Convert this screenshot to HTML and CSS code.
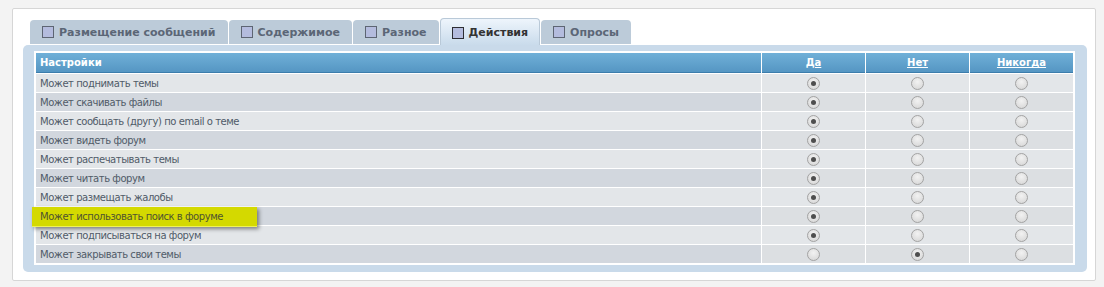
FILE: index.html
```html
<!DOCTYPE html>
<html lang="ru">
<head>
  <meta charset="UTF-8">
  <title>Права доступа</title>
  <link rel="stylesheet" href="styles.css">
</head>
<body>

<div class="wrap">
  <ul class="tabs">
    <li class="tab"><span class="box"></span>Размещение сообщений</li>
    <li class="tab"><span class="box"></span>Содержимое</li>
    <li class="tab"><span class="box"></span>Разное</li>
    <li class="tab active"><span class="box"></span>Действия</li>
    <li class="tab"><span class="box"></span>Опросы</li>
  </ul>

  <div class="panel">
    <table class="perms">
      <thead>
        <tr>
          <th class="name">Настройки</th>
          <th><a href="#">Да</a></th>
          <th><a href="#">Нет</a></th>
          <th><a href="#">Никогда</a></th>
        </tr>
      </thead>
      <tbody id="permBody"></tbody>
    </table>
  </div>
</div>

<script>
  // Permission rows: label + selected column (0 = Да, 1 = Нет, 2 = Никогда)
  const perms = [
    ["Может поднимать темы", 0],
    ["Может скачивать файлы", 0],
    ["Может сообщать (другу) по email о теме", 0],
    ["Может видеть форум", 0],
    ["Может распечатывать темы", 0],
    ["Может читать форум", 0],
    ["Может размещать жалобы", 0],
    ["Может использовать поиск в форуме", 0, true],
    ["Может подписываться на форум", 0],
    ["Может закрывать свои темы", 1]
  ];

  const tbody = document.getElementById("permBody");
  perms.forEach((p, i) => {
    const row = document.createElement("tr");
    row.className = i % 2 ? "row2" : "row1";
    const label = p[2] ? `<span class="mark">${p[0]}</span>` : p[0];
    let cells = `<td class="name">${label}</td>`;
    for (let c = 0; c < 3; c++) {
      cells += `<td><span class="radio${p[1] === c ? " on" : ""}"></span></td>`;
    }
    row.innerHTML = cells;
    tbody.appendChild(row);
  });
</script>

</body>
</html>
```

FILE: styles.css
```css
body {
  margin: 0;
  background: #f3f3f3;
  font-family: "DejaVu Sans", Verdana, sans-serif;
}

.wrap {
  margin: 8px 9px 0 12px;
  width: 1084px;
  height: 273px;
  background: #fff;
  border: 1px solid #d6d6d6;
  border-radius: 2px;
  padding-top: 10px;
  box-sizing: border-box;
}

/* Tabs */
.tabs {
  list-style: none;
  margin: 0 0 0 17px;
  padding: 0;
  display: flex;
  align-items: flex-end;
  gap: 1px;
  height: 26px;
}

.tab {
  display: flex;
  align-items: center;
  gap: 5px;
  height: 24px;
  margin-bottom: 1px;
  padding: 0 12px;
  background: #bccbd9;
  border-radius: 4px 4px 0 0;
  font-size: 11px;
  font-weight: bold;
  color: #5b6676;
  box-sizing: border-box;
}

.tab.active {
  height: 27px;
  margin-bottom: 0;
  padding: 1px 11px 0;
  background: linear-gradient(#eef5fc, #c9dbeb);
  border: 1px solid #b9c9d8;
  border-bottom: none;
  color: #333;
}

.box {
  width: 10px;
  height: 10px;
  background: #b4bcde;
  border: 1px solid #5d6573;
}

.tab.active .box {
  border-color: #2d2d33;
}

/* Panel */
.panel {
  margin: 0 8px 0 10px;
  padding: 6px 11px 7px 11px;
  background: #c9daea;
  border-radius: 5px;
}

.perms {
  width: 1041px;
  background: #fff;
  border: 1px solid #fff;
  border-spacing: 1px;
  font-size: 10px;
  letter-spacing: -0.45px;
  color: #505b68;
}

.perms th {
  height: 19px;
  padding: 0;
  background: linear-gradient(#70b0d8, #5596c3);
  border-bottom: 1px solid #3c7dac;
  color: #fff;
  font-weight: bold;
  letter-spacing: 0;
  text-align: center;
}

.perms th.name {
  text-align: left;
  padding-left: 4px;
}

.perms th a {
  color: #fff;
}

.perms td {
  height: 18px;
  padding: 0;
  width: 103px;
  text-align: center;
  vertical-align: middle;
}

.perms td.name {
  width: auto;
  text-align: left;
  padding-left: 4px;
}

.row1 td {
  background: #e3e6e9;
}

.row2 td {
  background: #dcdfe2;
}

.row2 td.name {
  background: #d2d7de;
}

/* Radio buttons */
.radio {
  display: inline-block;
  width: 11px;
  height: 11px;
  border: 1px solid #a3a3a3;
  border-radius: 50%;
  background: radial-gradient(circle at 50% 35%, #f2f2f2, #d4d4d4);
  vertical-align: middle;
  position: relative;
}

.radio.on::after {
  content: "";
  position: absolute;
  left: 3px;
  top: 3px;
  width: 5px;
  height: 5px;
  border-radius: 50%;
  background: #4e4e4e;
}

/* Highlighted row label */
.mark {
  display: inline-block;
  position: relative;
  margin: -1px 0 -2px -8px;
  padding-left: 8px;
  width: 217px;
  height: 19px;
  line-height: 19px;
  background: #d4d900;
  border-bottom: 1px solid #eef25a;
  box-shadow: 2px 2px 4px rgba(0, 0, 0, 0.45);
  color: #4f5430;
}
```
